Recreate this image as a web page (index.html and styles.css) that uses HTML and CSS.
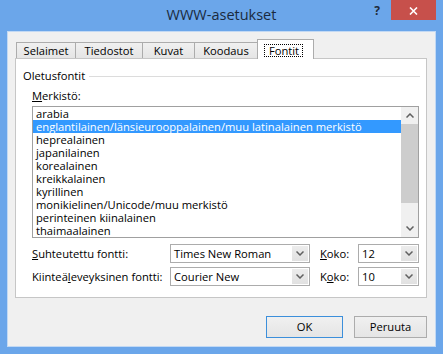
FILE: index.html
```html
<!DOCTYPE html>
<html lang="fi">

<head>
    <meta charset="UTF-8">
    <meta name="viewport" content="width=device-width, initial-scale=1.0">
    <title>WWW-asetukset</title>
    <link rel="stylesheet" href="styles.css">
</head>

<body>
    <div class="window">
        <!-- otsikkopalkki -->
        <div class="titlebar">
            <div class="title">WWW-asetukset</div>
            <div class="caption-btns">
                <div class="help-btn">?</div>
                <div class="close-btn">
                    <svg width="9" height="8" viewBox="0 0 9 8">
                        <path d="M1 0.5 L8 7.5 M8 0.5 L1 7.5" stroke="#fff" stroke-width="1.6" fill="none" />
                    </svg>
                </div>
            </div>
        </div>

        <div class="client">
            <!-- välilehdet -->
            <div class="tabs">
                <div class="tab tab-selaimet">Selaimet</div>
                <div class="tab tab-tiedostot">Tiedostot</div>
                <div class="tab tab-kuvat">Kuvat</div>
                <div class="tab tab-koodaus">Koodaus</div>
                <div class="tab tab-fontit active"><span class="focus-rect">Fontit</span></div>
            </div>

            <div class="panel">
                <div class="group">
                    <div class="group-head">
                        <span class="group-title">Oletusfontit</span>
                        <span class="group-line"></span>
                    </div>
                    <div class="group-body">
                        <div class="field-label"><u>M</u>erkistö:</div>
                        <div class="listbox">
                            <ul class="list-items">
                                <li>arabia</li>
                                <li class="selected">englantilainen/länsieurooppalainen/muu latinalainen merkistö</li>
                                <li>heprealainen</li>
                                <li>japanilainen</li>
                                <li>korealainen</li>
                                <li>kreikkalainen</li>
                                <li>kyrillinen</li>
                                <li>monikielinen/Unicode/muu merkistö</li>
                                <li>perinteinen kiinalainen</li>
                                <li>thaimaalainen</li>
                            </ul>
                            <div class="scrollbar">
                                <div class="sb-arrow">
                                    <svg width="8" height="5" viewBox="0 0 8 5">
                                        <polyline points="0.5,4.5 4,1 7.5,4.5" stroke="#606060" stroke-width="1.5" fill="none" />
                                    </svg>
                                </div>
                                <div class="sb-thumb"></div>
                                <div class="sb-track"></div>
                                <div class="sb-arrow">
                                    <svg width="8" height="5" viewBox="0 0 8 5">
                                        <polyline points="0.5,0.5 4,4 7.5,0.5" stroke="#606060" stroke-width="1.5" fill="none" />
                                    </svg>
                                </div>
                            </div>
                        </div>

                        <div class="font-row">
                            <span class="row-label"><u>S</u>uhteutettu fontti:</span>
                            <div class="combo combo-font">
                                <span class="combo-value">Times New Roman</span>
                                <span class="combo-btn">
                                    <svg width="8" height="5" viewBox="0 0 8 5">
                                        <polyline points="0.5,0.5 4,4 7.5,0.5" stroke="#606060" stroke-width="1.5" fill="none" />
                                    </svg>
                                </span>
                            </div>
                            <span class="size-label"><u>K</u>oko:</span>
                            <div class="combo combo-size">
                                <span class="combo-value">12</span>
                                <span class="combo-btn">
                                    <svg width="8" height="5" viewBox="0 0 8 5">
                                        <polyline points="0.5,0.5 4,4 7.5,0.5" stroke="#606060" stroke-width="1.5" fill="none" />
                                    </svg>
                                </span>
                            </div>
                        </div>
                        <div class="font-row">
                            <span class="row-label">Kiinteä<u>l</u>eveyksinen fontti:</span>
                            <div class="combo combo-font">
                                <span class="combo-value">Courier New</span>
                                <span class="combo-btn">
                                    <svg width="8" height="5" viewBox="0 0 8 5">
                                        <polyline points="0.5,0.5 4,4 7.5,0.5" stroke="#606060" stroke-width="1.5" fill="none" />
                                    </svg>
                                </span>
                            </div>
                            <span class="size-label">K<u>o</u>ko:</span>
                            <div class="combo combo-size">
                                <span class="combo-value">10</span>
                                <span class="combo-btn">
                                    <svg width="8" height="5" viewBox="0 0 8 5">
                                        <polyline points="0.5,0.5 4,4 7.5,0.5" stroke="#606060" stroke-width="1.5" fill="none" />
                                    </svg>
                                </span>
                            </div>
                        </div>
                    </div>
                </div>
            </div>

            <!-- painikkeet -->
            <div class="buttons">
                <div class="btn btn-ok">OK</div>
                <div class="btn btn-cancel">Peruuta</div>
            </div>
        </div>
    </div>
</body>

</html>
```

FILE: styles.css
```css
html,
body {
    padding: 0;
    margin: 0;
}

body {
    width: 443px;
    height: 354px;
    overflow: hidden;
    font-family: "Segoe UI", "Open Sans", sans-serif;
    font-size: 11.2px;
    color: #000;
}

.window {
    width: 443px;
    height: 354px;
    background-color: #6ba6ea;
    display: flex;
    flex-direction: column;
    box-sizing: border-box;
}

/* otsikkopalkki */
.titlebar {
    height: 31px;
    display: grid;
    grid-template-columns: 1fr auto 1fr;
}

.title {
    grid-column: 2;
    font-size: 14.5px;
    line-height: 30px;
    color: #1a2a3e;
}

.caption-btns {
    grid-column: 3;
    justify-self: end;
    display: flex;
    align-items: flex-start;
    margin-right: 7px;
}

.help-btn {
    width: 26px;
    height: 20px;
    margin-right: 1px;
    line-height: 22px;
    text-align: center;
    font-weight: bold;
    font-size: 12px;
    color: #1f2b3a;
}

.close-btn {
    width: 45px;
    height: 20px;
    background-color: #c7504b;
    display: flex;
    align-items: center;
    justify-content: center;
}

.close-btn svg {
    margin-top: 2px;
}

.client {
    flex: 1;
    margin: 0 7px 7px;
    background-color: #f0f0f0;
    border: 1px solid #c2d9f4;
    display: flex;
    flex-direction: column;
}

/* välilehdet */
.tabs {
    height: 19px;
    padding: 7px 0 0 8px;
    display: flex;
    align-items: flex-end;
}

.tab {
    height: 16px;
    line-height: 15px;
    text-align: center;
    border: 1px solid #acacac;
    border-bottom: none;
    margin-left: -1px;
    background: linear-gradient(#f0f0f0, #e5e5e5);
    box-sizing: border-box;
}

.tab:first-child {
    margin-left: 0;
}

.tab-selaimet { width: 60px; }
.tab-tiedostot { width: 68px; }
.tab-kuvat { width: 53px; }
.tab-koodaus { width: 64px; }
.tab-fontit { width: 57px; }

.tab.active {
    height: 20px;
    margin-bottom: -1px;
    background: #fff;
    position: relative;
    z-index: 1;
    padding-top: 4px;
    line-height: 11px;
}

.focus-rect {
    display: inline-block;
    border: 1px dotted #000;
    padding: 0 3px 0 4px;
    margin-left: -4px;
}

.panel {
    width: 412px;
    height: 240px;
    margin-left: 7px;
    background-color: #fff;
    border: 1px solid #c6c6c6;
    box-sizing: border-box;
}

.group {
    margin: 10px 6px 0 7px;
}

.group-head {
    height: 14px;
    display: flex;
    align-items: center;
}

.group-title {
    line-height: 14px;
    padding-right: 4px;
}

.group-line {
    flex: 1;
    height: 1px;
    background-color: #dcdcdc;
}

.group-body {
    padding: 0 1px 0 9px;
}

.field-label {
    margin-top: 6px;
    line-height: 14px;
}

.listbox {
    margin-top: 3px;
    height: 132px;
    border: 1px solid #a0a0a0;
    box-sizing: border-box;
    display: flex;
}

.list-items {
    flex: 1;
    list-style: none;
    margin: 0;
    padding: 0;
}

.list-items li {
    height: 13px;
    line-height: 13px;
    padding-left: 3px;
    white-space: nowrap;
}

.list-items li.selected {
    background-color: #3399ff;
    color: #fff;
}

.scrollbar {
    width: 17px;
    background-color: #f0f0f0;
    display: flex;
    flex-direction: column;
}

.sb-arrow {
    height: 17px;
    display: flex;
    align-items: center;
    justify-content: center;
}

.sb-thumb {
    height: 79px;
    background-color: #cdcdcd;
}

.sb-track {
    flex: 1;
}

.font-row {
    height: 19px;
    margin-top: 6px;
    display: flex;
    align-items: center;
}

.font-row + .font-row {
    margin-top: 4px;
}

.row-label {
    width: 138px;
}

.size-label {
    width: 38px;
    margin-left: 10px;
}

.combo {
    height: 19px;
    border: 1px solid #acacac;
    box-sizing: border-box;
    background-color: #fff;
    display: flex;
}

.combo-font { width: 140px; }
.combo-size { width: 61px; }

.combo-value {
    flex: 1;
    padding-left: 3px;
    line-height: 17px;
}

.combo-btn {
    width: 16px;
    margin: 1px;
    background: linear-gradient(#ececec, #e1e1e1);
    display: flex;
    align-items: center;
    justify-content: center;
}

/* painikkeet */
.buttons {
    margin-top: 18px;
    padding-right: 8px;
    display: flex;
    justify-content: flex-end;
}

.btn {
    height: 22px;
    line-height: 20px;
    text-align: center;
    border: 1px solid #acacac;
    background: linear-gradient(#f0f0f0, #e5e5e5);
    box-sizing: border-box;
}

.btn-ok {
    width: 77px;
    border-color: #3c8fdb;
}

.btn-cancel {
    width: 73px;
    margin-left: 11px;
}
```
